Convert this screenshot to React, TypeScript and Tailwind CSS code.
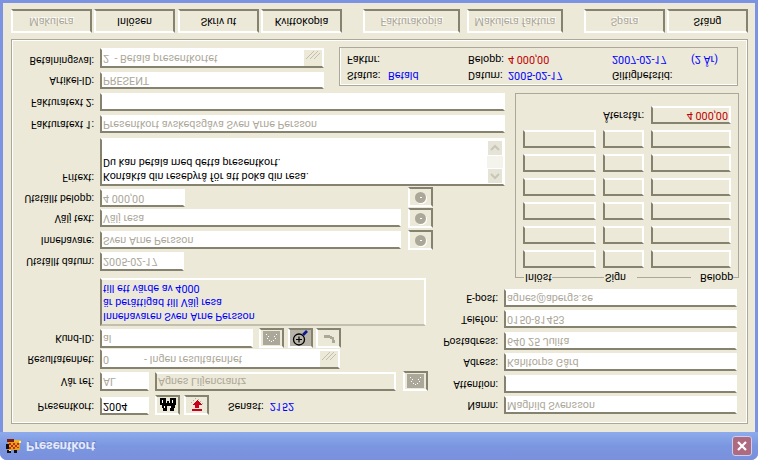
import type { ReactNode } from "react";

const sunken = "border-2 border-t-[#85826f] border-l-[#85826f] border-r-white border-b-white";
const raised = "border-2 border-t-white border-l-white border-r-[#85826f] border-b-[#85826f]";
const groupLine = "border-[#aca899]";

// icons are drawn the way they look in the picture, the page itself is mirrored
const FlipSvg = ({ w, h, children }: { w: number; h: number; children: ReactNode }) => (
  <svg width={w} height={h} viewBox={`0 0 ${w} ${h}`} shapeRendering="crispEdges" className="-scale-y-100">
    {children}
  </svg>
);

const Label = ({ text, w = "w-[82px]" }: { text: string; w?: string }) => (
  <span className={`${w} mr-[6px] text-right text-[10.4px] text-black shrink-0 whitespace-nowrap`}>{text}</span>
);

const Input = ({ value, className = "", dark = false, fill = "bg-white" }: { value?: string; className?: string; dark?: boolean; fill?: string }) => (
  <div className={`${sunken} ${fill} ${dark ? "text-black" : "text-[#aca899]"} flex items-center pl-[1px] whitespace-pre overflow-hidden ${className}`}>
    {value}
  </div>
);

const Combo = ({ value, className = "" }: { value: string; className?: string }) => (
  <div className={`${sunken} bg-white flex text-[#aca899] ${className}`}>
    <span className="flex-1 pl-[1px] whitespace-pre flex items-center">{value}</span>
    <div className="w-[18px] bg-[#ece9d8] flex items-end justify-center">
      <FlipSvg w={18} h={10}>
        <path d="M2 9 L10 1 M6 9 L14 1 M10 9 L16 3" stroke="#c2bfae" strokeWidth="1.4" fill="none" />
      </FlipSvg>
    </div>
  </div>
);

const IconBtn = ({ children, className = "", pressed = false }: { children?: ReactNode; className?: string; pressed?: boolean }) => (
  <div className={`${raised} w-[25px] h-[20px] shrink-0 flex items-center justify-center ${pressed ? "bg-[#b8b5a8]" : ""} ${className}`}>
    {children}
  </div>
);

const GridIcon = () => (
  <div className="w-[17px] h-[14px] bg-[#aca899] flex items-center justify-center">
    <FlipSvg w={17} h={14}>
      <path d="M3 3h1v1H3zM5 5h1v1H5zM6 9h1v1H6zM8 10h1v1H8zM11 5h1v1h-1zM13 3h1v1h-1zM10 9h1v1h-1zM4 7h1v1H4zM12 7h1v1h-1z" fill="#fff" />
    </FlipSvg>
  </div>
);

const RoundIcon = () => (
  <div className="w-[11px] h-[11px] rounded-full bg-[#aca899] shadow-[1px_-1px_0_#fff] flex items-center justify-center">
    <div className="w-[2px] h-[1px] bg-white" />
  </div>
);

const ToolBtn = ({ text, disabled = false, className = "w-[81px]" }: { text: string; disabled?: boolean; className?: string }) => (
  <div
    className={`${raised} ${className} h-[24px] flex items-center justify-center shrink-0 ${disabled ? "text-[#aca899] [text-shadow:1px_1px_0_#fff]" : "text-black"}`}
  >
    {text}
  </div>
);

const PixelLogo = () => (
  <FlipSvg w={17} h={16}>
    <rect x="2" y="1" width="7" height="3" fill="#7a1c10" />
    <rect x="9" y="2" width="7" height="2" fill="#f0b020" />
    <rect x="3" y="4" width="12" height="8" fill="#e2a21a" />
    <path d="M4 5h2v2H4zM8 5h2v2H8zM12 5h2v2h-2zM6 7h2v2H6zM10 7h2v2h-2zM4 9h2v2H4zM8 9h2v2H8zM12 9h2v1h-2z" fill="#c82818" />
    <path d="M1 6h3v5H1zM2 12h4v3H2zM9 12h3v3H9z" fill="#111" />
    <path d="M14 3h2v2h-2zM4 12h2v1H4z" fill="#f5e8b0" />
  </FlipSvg>
);

const rows = [0, 1, 2, 3, 4, 5];

export default function App() {
  return (
    <div className="w-[758px] h-[460px] -scale-y-100 overflow-hidden bg-white text-[10.8px] leading-[14px] font-['Roboto','Liberation_Sans',sans-serif]">
      <div className="h-[460px] flex flex-col rounded-t-[7px] bg-[#7b93e0] overflow-hidden">
        {/* title bar */}
        <div className="h-[28px] shrink-0 flex items-center pl-[5px] pr-[6px] bg-gradient-to-b from-[#7a90dc] via-[#7b96e0] to-[#8dabec]">
          <PixelLogo />
          <span className="ml-[4px] font-bold text-[13px] text-[#e3e9fa] [text-shadow:1px_1px_0_#6a80c8]">Presentkort</span>
          <div className="ml-auto w-[20px] h-[20px] rounded-[3px] border border-[#c9cfee] bg-[#ad6a80] flex items-center justify-center">
            <svg width="12" height="12" viewBox="0 0 12 12"><path d="M2 2 L10 10 M10 2 L2 10" stroke="#fff" strokeWidth="2.2" /></svg>
          </div>
        </div>

        <div className="flex-1 mx-[3px] mb-[3px] bg-[#ece9d8] pl-[8px] pt-[8px] flex flex-col">
          {/* main panel */}
          <div className={`w-[737px] h-[385px] border ${groupLine} shadow-[inset_1px_1px_0_#fff,inset_-1px_-1px_0_#fff] pt-[8px] flex flex-col`}>
            {/* lower part of the form */}
            <div className="h-[137px] flex shrink-0">
              <div className="w-[428px] shrink-0 flex flex-col">
                <div className="h-[24px] flex items-start">
                  <div className="flex items-center h-[18px]"><Label text="Presentkort:" /></div>
                  <Input value="2004" dark className="w-[49px] h-[18px]" />
                  <IconBtn className="ml-[6px]">
                    <FlipSvg w={18} h={15}>
                      <path d="M1 1h6v5h1V4h2v2h1V1h6v7h-1v3h-1v3h-4V9H8v5H4v-3H3V8H1z" fill="#000" />
                      <path d="M3 3h1v3H3zM13 3h1v3h-1zM5 9h1v2H5zM11 9h1v2h-1z" fill="#fff" />
                    </FlipSvg>
                  </IconBtn>
                  <IconBtn className="ml-[4px]">
                    <FlipSvg w={16} h={14}>
                      <path d="M6 0h1v1H6zM9 1h1v1H9zM4 2h1v1H4zM11 3h1v1h-1zM2 4h1v1H2zM13 5h1v1h-1z" fill="#b8a8a0" />
                      <path d="M8 2 L13 7 H10 V10 H6 V7 H3 Z" fill="#c8001c" />
                      <path d="M3 11h10v2H3z" fill="#c8001c" />
                    </FlipSvg>
                  </IconBtn>
                  <div className="flex items-center h-[18px]">
                    <span className="ml-[19px] text-black">Senast:</span>
                    <span className="ml-[6px] text-[#0000ff]">2152</span>
                  </div>
                </div>
                <div className="h-[22px] flex items-start">
                  <div className="flex items-center h-[19px]"><Label text="Vår ref:" /></div>
                  <Input value="AL" className="w-[49px] h-[19px]" />
                  <Input value="Agnes Liljencrantz" fill="bg-[#ece9d8]" className="ml-[6px] w-[241px] h-[19px]" />
                  <IconBtn className="ml-[7px]"><GridIcon /></IconBtn>
                </div>
                <div className="h-[21px] flex items-start">
                  <div className="flex items-center h-[20px]"><Label text="Resultatenhet:" /></div>
                  <Combo value="0             - Ingen resultatenhet" className="w-[240px] h-[20px]" />
                </div>
                <div className="h-[22px] flex items-start">
                  <div className="flex items-center h-[19px]"><Label text="Kund-ID:" /></div>
                  <Input value="al" className="w-[153px] h-[19px]" />
                  <IconBtn className="ml-[6px]"><GridIcon /></IconBtn>
                  <IconBtn pressed className="ml-[4px]">
                    <svg width="18" height="16" viewBox="0 0 18 16" className="-scale-y-100">
                      <circle cx="7" cy="9.5" r="5.5" fill="none" stroke="#000" strokeWidth="1.3" />
                      <path d="M4 9.5h6M7 6.5v6" stroke="#000" strokeWidth="1.2" />
                      <path d="M11 5 L15 1" stroke="#0a1a90" strokeWidth="2.6" />
                    </svg>
                  </IconBtn>
                  <IconBtn className="ml-[3px]">
                    <FlipSvg w={16} h={12}>
                      <path d="M3 3h6v1h2v1h2v3h1v3h-3V7H9V6H3z" fill="#aca899" />
                    </FlipSvg>
                  </IconBtn>
                </div>
                <div className={`ml-[88px] w-[326px] h-[48px] border-2 border-t-[#c2bfae] border-l-[#85826f] border-r-white border-b-white pl-[1px] pt-[1px] text-[#0000ff]`}>
                  <div>Innehavaren Sven Arne Persson</div>
                  <div>är berättigad till Välj resa</div>
                  <div>till ett värde av 4000</div>
                </div>
              </div>
              {/* customer */}
              <div className="w-[297px] shrink-0 pt-[1px] flex flex-col gap-[3.4px]">
                {[
                  ["Namn:", "Maghild Svensson"],
                  ["Attention:", ""],
                  ["Adress:", "Kahltorps Gård"],
                  ["Postadress:", "640 25 Julita"],
                  ["Telefon:", "0150-81453"],
                  ["E-post:", "agnes@abergs.se"],
                ].map(([label, value]) => (
                  <div key={label} className="flex items-center h-[18px]">
                    <Label text={label} w="w-[58px]" />
                    <Input value={value} className="w-[233px] h-[18px]" />
                  </div>
                ))}
              </div>
            </div>

            {/* middle part */}
            <div className="h-[185px] flex shrink-0">
              <div className="w-[493px] shrink-0 pt-[7px] flex flex-col">
                <div className="h-[22px] flex items-start">
                  <div className="flex items-center h-[19px]"><Label text="Utställt datum:" /></div>
                  <Input value="2005-02-17" className="w-[84px] h-[19px]" />
                </div>
                <div className="h-[22px] flex items-start">
                  <div className="flex items-center h-[18px]"><Label text="Innehavare:" /></div>
                  <Input value="Sven Arne Persson" className="w-[301px] h-[18px]" />
                  <IconBtn className="ml-[7px] -mt-[1px]"><RoundIcon /></IconBtn>
                </div>
                <div className="h-[20px] flex items-start">
                  <div className="flex items-center h-[18px]"><Label text="Välj text:" /></div>
                  <Input value="Välj resa" className="w-[301px] h-[18px]" />
                  <IconBtn className="ml-[7px] -mt-[1px]"><RoundIcon /></IconBtn>
                </div>
                <div className="h-[22px] flex items-start">
                  <div className="flex items-center h-[18px]"><Label text="Utställt belopp:" /></div>
                  <Input value="4 000,00" className="w-[85px] h-[18px]" />
                  <IconBtn className="ml-[223px]"><RoundIcon /></IconBtn>
                </div>
                <div className="h-[53px] flex items-start">
                  <div className="h-[18px] flex items-center"><Label text="Fritext:" /></div>
                  <div className={`${sunken} bg-white w-[405px] h-[48px] flex text-black`}>
                    <div className="flex-1 pl-[1px] pt-[1px]">
                      <div>Kontakta din resebyrå för att boka din resa.</div>
                      <div>Du kan betala med detta presentkort.</div>
                    </div>
                    <div className="w-[16px] bg-[#f4f3ec] flex flex-col justify-between">
                      <div className="h-[16px] bg-[#e6e4d6] border border-white flex items-center justify-center">
                        <svg width="10" height="8" viewBox="0 0 10 8"><path d="M1 6 L5 2 L9 6" fill="none" stroke="#c8c6b8" strokeWidth="2" /></svg>
                      </div>
                      <div className="h-[16px] bg-[#e6e4d6] border border-white flex items-center justify-center">
                        <svg width="10" height="8" viewBox="0 0 10 8"><path d="M1 2 L5 6 L9 2" fill="none" stroke="#c8c6b8" strokeWidth="2" /></svg>
                      </div>
                    </div>
                  </div>
                </div>
                <div className="h-[22px] flex items-start">
                  <div className="flex items-center h-[18px]"><Label text="Fakturatext 1:" /></div>
                  <Input value="Presentkort avskedsgåva Sven Arne Persson" className="w-[405px] h-[18px]" />
                </div>
                <div className="h-[18px] flex items-start">
                  <div className="flex items-center h-[18px]"><Label text="Fakturatext 2:" /></div>
                  <Input className="w-[405px] h-[18px]" />
                </div>
              </div>

              {/* payments */}
              <div className={`ml-[10px] w-[224px] h-[185px] border-l border-r border-b ${groupLine} flex flex-col`}>
                <div className="h-px flex items-center shrink-0 text-black">
                  <div className="w-[8px] h-px bg-[#aca899]" />
                  <span className="w-[28px] pl-[1px]">Inlöst</span>
                  <div className="w-[52px] h-px bg-[#aca899]" />
                  <span className="w-[33px] pl-[1px]">Sign</span>
                  <div className="w-[54px] h-px bg-[#aca899]" />
                  <span className="w-[42px] pl-[9px]">Belopp</span>
                  <div className="flex-1 h-px bg-[#aca899]" />
                </div>
                <div className="pt-[9px] pl-[7px] flex flex-col gap-[6px]">
                  {rows.map((r) => (
                    <div key={r} className="flex gap-[7px]">
                      <div className={`${sunken} w-[73px] h-[18px]`} />
                      <div className={`${sunken} w-[41px] h-[18px]`} />
                      <div className={`${sunken} w-[80px] h-[18px]`} />
                    </div>
                  ))}
                  <div className="flex items-center gap-[7px]">
                    <span className="w-[121px] text-right text-black">Återstår:</span>
                    <div className={`${sunken} w-[80px] h-[18px] flex items-center justify-end pr-[1px] text-[#c00000]`}>4 000,00</div>
                  </div>
                </div>
              </div>
            </div>

            {/* upper part */}
            <div className="flex pt-[4px]">
              <div className="w-[312px] shrink-0 flex flex-col">
                <div className="h-[21px] flex items-start">
                  <div className="flex items-center h-[17px]"><Label text="Artikel-ID:" /></div>
                  <Input value="PRESENT" className="w-[224px] h-[17px]" />
                </div>
                <div className="flex items-start">
                  <div className="flex items-center h-[16px]"><Label text="Betalningsval:" /></div>
                  <Combo value="2  - Betala presentkortet" className="w-[224px] h-[20px]" />
                </div>
              </div>
              <div className={`ml-[15px] mt-[3px] w-[399px] h-[39px] border ${groupLine} shadow-[inset_1px_1px_0_#fff] pl-[7px] pt-[3px] text-black`}>
                <div className="flex h-[16px]">
                  <span className="w-[41px]">Status:</span>
                  <span className="w-[80px] text-[#0000ff]">Betald</span>
                  <span className="w-[40px]">Datum:</span>
                  <span className="w-[104px] text-[#0000ff]">2005-02-17</span>
                  <span className="w-[79px]">Giltighetstid:</span>
                </div>
                <div className="flex h-[16px]">
                  <span className="w-[121px]">Faktnr:</span>
                  <span className="w-[40px]">Belopp:</span>
                  <span className="w-[104px] text-[#c00000]">4 000,00</span>
                  <span className="w-[79px] text-[#0000ff]">2007-02-17</span>
                  <span className="text-[#0000ff]">(2 År)</span>
                </div>
              </div>
            </div>
          </div>

          {/* buttons */}
          <div className="mt-[6px] flex">
            <ToolBtn text="Makulera" disabled />
            <ToolBtn text="Inlösen" className="w-[81px] ml-[2px]" />
            <ToolBtn text="Skriv ut" className="w-[81px] ml-[3px]" />
            <ToolBtn text="Kvittokopia" className="w-[81px] ml-[2px]" />
            <ToolBtn text="Fakturakopia" disabled className="w-[97px] ml-[21px]" />
            <ToolBtn text="Makulera faktura" disabled className="w-[96px] ml-[7px]" />
            <ToolBtn text="Spara" disabled className="w-[81px] ml-[21px]" />
            <ToolBtn text="Stäng" className="w-[81px] ml-[2px]" />
          </div>
        </div>
      </div>
    </div>
  );
}
